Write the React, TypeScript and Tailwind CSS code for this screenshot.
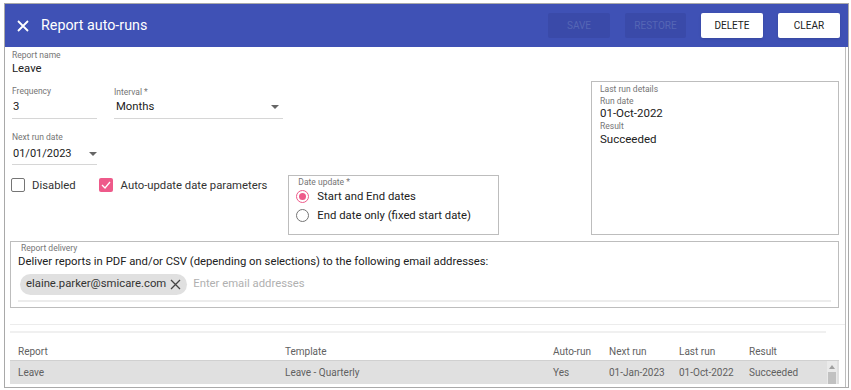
import React from "react";

const font = { fontFamily: "Roboto, 'Liberation Sans', sans-serif" };

function Caret() {
  return (
    <svg width="8" height="4" viewBox="0 0 8 4" className="shrink-0">
      <path d="M0 0 L8 0 L4 4 Z" fill="#666" />
    </svg>
  );
}

export default function App() {
  return (
    <div className="w-[851px] h-[390px] bg-white pt-[3px] pl-[4px] pr-[2px] pb-[2px] overflow-hidden" style={font}>
      <div className="w-[845px] h-[385px] border border-[#a9a9a9] flex flex-col bg-white">
        {/* Header */}
        <div className="h-[43px] bg-[#3f51b5] flex items-center pl-[12px] pr-[8px] shrink-0">
          <svg width="12" height="12" viewBox="0 0 12 12" className="mr-[12px]">
            <path d="M1 1 L11 11 M11 1 L1 11" stroke="white" strokeWidth="1.8" />
          </svg>
          <div className="text-white text-[14.3px]">Report auto-runs</div>
          <div className="flex-1" />
          <div className="flex gap-[15px]">
            <div className="w-[62px] h-[25px] bg-[#3a4aa9] text-[#5566b5] text-[10px] flex items-center justify-center rounded-[2px]">SAVE</div>
            <div className="w-[61px] h-[25px] bg-[#3a4aa9] text-[#5566b5] text-[10px] flex items-center justify-center rounded-[2px]">RESTORE</div>
            <div className="w-[62px] h-[25px] bg-white text-[#212121] text-[10px] flex items-center justify-center rounded-[2px] shadow">DELETE</div>
            <div className="w-[62px] h-[25px] bg-white text-[#212121] text-[10px] flex items-center justify-center rounded-[2px] shadow">CLEAR</div>
          </div>
        </div>

        {/* Content */}
        <div className="flex-1 border-r border-[#bdbdbd] mr-[2px] flex flex-col">
          <div className="flex">
            {/* Left */}
            <div className="w-[586px] pl-[7px]">
              <div className="text-[8.5px] leading-[12px] text-[#757575] mt-[2px]">Report name</div>
              <div className="text-[11.3px] leading-[16px] text-[#212121]">Leave</div>
              <div className="flex mt-[8px] gap-[17px]">
                <div className="w-[85px] border-b border-[#d6d6d6] pb-[3px]">
                  <div className="text-[8.5px] leading-[12px] text-[#757575]">Frequency</div>
                  <div className="text-[11.3px] leading-[16px] text-[#212121] mt-[2px] pl-[1px]">3</div>
                </div>
                <div className="w-[169px] border-b border-[#d6d6d6] pb-[3px]">
                  <div className="text-[8.5px] leading-[12px] text-[#757575] mt-[1px]">Interval *</div>
                  <div className="flex items-center justify-between mt-[1px] pr-[4px]">
                    <div className="text-[11.3px] leading-[16px] text-[#212121] pl-[2px]">Months</div>
                    <Caret />
                  </div>
                </div>
              </div>
              <div className="w-[85px] border-b border-[#d6d6d6] pb-[2px] mt-[12px]">
                <div className="text-[8.5px] leading-[12px] text-[#757575]">Next run date</div>
                <div className="flex items-center justify-between mt-[3px]">
                  <div className="text-[11px] leading-[16px] text-[#212121] pl-[1px]">01/01/2023</div>
                  <Caret />
                </div>
              </div>
              <div className="flex mt-[10px] ml-[-1px]">
                <div className="flex items-start pt-[3px]">
                  <div className="w-[14px] h-[14px] border border-[#757575] rounded-[2px] bg-white" />
                  <div className="ml-[7px] text-[11.3px] leading-[15px] text-[#333]">Disabled</div>
                </div>
                <div className="flex items-start pt-[3px] ml-[23px]">
                  <div className="w-[14px] h-[14px] rounded-[2px] bg-[#ee5a8a] flex items-center justify-center">
                    <svg width="10" height="8" viewBox="0 0 10 8">
                      <path d="M1 4 L4 7 L9 1" stroke="white" strokeWidth="1.3" fill="none" />
                    </svg>
                  </div>
                  <div className="ml-[8px] text-[11.3px] leading-[15px] text-[#333]">Auto-update date parameters</div>
                </div>
                <div className="ml-[21px] w-[211px] h-[60px] border border-[#bdbdbd] pl-[7px] pt-[1px]">
                  <div className="text-[8.5px] leading-[11px] text-[#757575] pl-[2px]">Date update *</div>
                  <div className="flex items-center">
                    <div className="w-[13px] h-[13px] rounded-full border border-[#ee5a8a] flex items-center justify-center">
                      <div className="w-[7px] h-[7px] rounded-full bg-[#ee5a8a]" />
                    </div>
                    <div className="ml-[8px] text-[11.3px] leading-[17px] text-[#212121]">Start and End dates</div>
                  </div>
                  <div className="flex items-center mt-[2px]">
                    <div className="w-[13px] h-[13px] rounded-full border border-[#757575]" />
                    <div className="ml-[8px] text-[11.3px] leading-[17px] text-[#212121]">End date only (fixed start date)</div>
                  </div>
                </div>
              </div>
            </div>
            {/* Right */}
            <div className="w-[248px] h-[154px] mt-[34px] border border-[#bdbdbd] pl-[8px] pt-[1px]">
              <div className="text-[8.5px] leading-[12px] text-[#757575]">Last run details</div>
              <div className="text-[8.5px] leading-[12px] text-[#757575]">Run date</div>
              <div className="text-[11.5px] leading-[13px] text-[#212121]">01-Oct-2022</div>
              <div className="text-[8.5px] leading-[12px] text-[#757575]">Result</div>
              <div className="text-[11.5px] leading-[15px] text-[#212121]">Succeeded</div>
            </div>
          </div>

          {/* Delivery */}
          <div className="ml-[5px] mr-[6px] mt-[6px] h-[67px] border border-[#bdbdbd] pl-[7px] pr-[7px]">
            <div className="text-[8.5px] leading-[12px] text-[#757575] pl-[3px]">Report delivery</div>
            <div className="text-[11.3px] leading-[15px] text-[#212121]">Deliver reports in PDF and/or CSV (depending on selections) to the following email addresses:</div>
            <div className="border-b-2 border-[#ececec] pb-[5px] mt-[5px] flex items-center">
              <div className="h-[21px] rounded-full bg-[#e0e0e0] flex items-center pl-[6px] pr-[6px] ml-[2px] text-[11.3px] text-[#333]">
                elaine.parker@smicare.com
                <svg width="11" height="11" viewBox="0 0 11 11" className="ml-[4px]">
                  <path d="M1 1 L10 10 M10 1 L1 10" stroke="#444" strokeWidth="1.3" />
                </svg>
              </div>
              <div className="ml-[6px] text-[11.3px] text-[#b0b0b0]">Enter email addresses</div>
            </div>
          </div>

          <div className="ml-[5px] mt-[16px] border-t border-[#ececec]" />
          <div className="ml-[5px] mr-[19px] mt-[6px] border-t-2 border-[#f0f0f0]" />

          {/* Table */}
          <div className="ml-[5px] mr-[6px] mt-[10px] text-[10px]">
            <div className="flex h-[17px] items-center text-[#616161] pl-[8px]">
              <div className="w-[267px]">Report</div>
              <div className="w-[268px]">Template</div>
              <div className="w-[56px]">Auto-run</div>
              <div className="w-[70px]">Next run</div>
              <div className="w-[70px]">Last run</div>
              <div className="flex-1">Result</div>
            </div>
            <div className="flex h-[24px] items-center bg-[#e0e0e0] text-[#616161] pl-[8px] border-t border-[#d0d0d0]">
              <div className="w-[267px]">Leave</div>
              <div className="w-[268px]">Leave - Quarterly</div>
              <div className="w-[56px]">Yes</div>
              <div className="w-[70px]">01-Jan-2023</div>
              <div className="w-[70px]">01-Oct-2022</div>
              <div className="flex-1">Succeeded</div>
              <div className="w-[10px] h-[23px] mr-[2px] flex flex-col items-center bg-[#eaeaea]">
                <svg width="6" height="4" viewBox="0 0 6 4" className="mt-[4px]">
                  <path d="M0 4 L3 0 L6 4 Z" fill="#a0a0a0" />
                </svg>
                <div className="w-[8px] flex-1 mt-[3px] bg-[#c1c1c1]" />
              </div>
            </div>
          </div>
        </div>
      </div>
    </div>
  );
}
